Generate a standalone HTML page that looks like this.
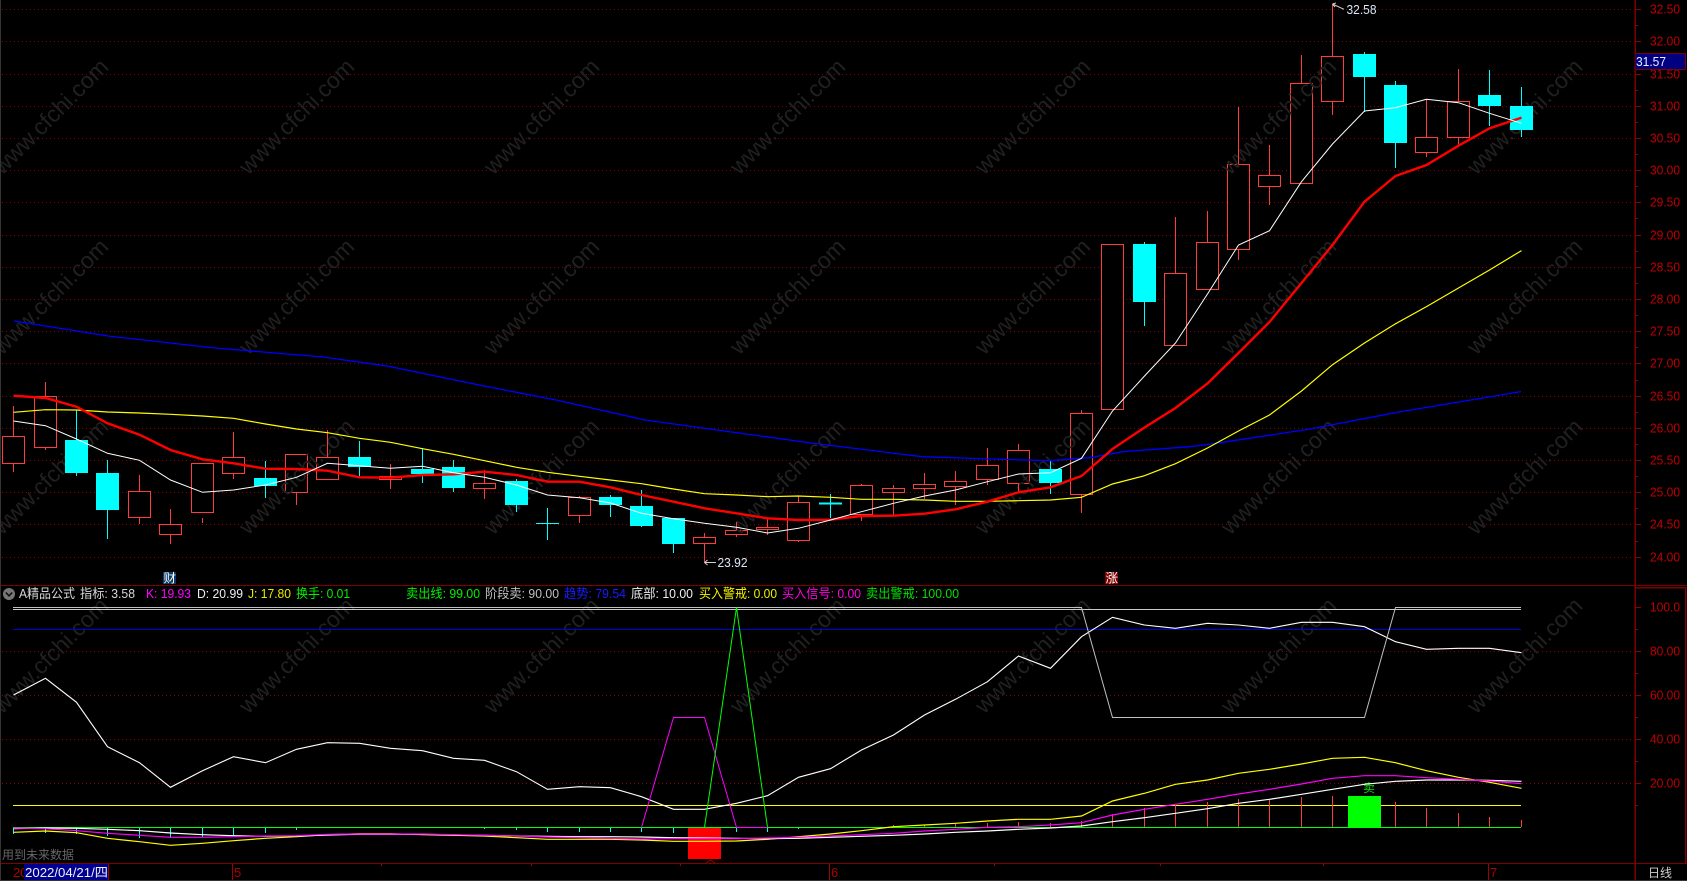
<!DOCTYPE html>
<html><head><meta charset="utf-8"><title>K线</title>
<style>
html,body{margin:0;padding:0;background:#000;width:1687px;height:881px;overflow:hidden}
svg{display:block;font-family:"Liberation Sans","Noto Sans CJK SC",sans-serif}
</style></head><body>
<svg width="1687" height="881" viewBox="0 0 1687 881" xmlns="http://www.w3.org/2000/svg">
<rect width="1687" height="881" fill="#000"/>
<!-- grid -->
<path stroke="#8c0000" stroke-width="1" stroke-dasharray="1 3" fill="none" shape-rendering="crispEdges" d="M2 9.5H1634M2 41.5H1634M2 74.5H1634M2 106.5H1634M2 138.5H1634M2 170.5H1634M2 202.5H1634M2 235.5H1634M2 267.5H1634M2 299.5H1634M2 331.5H1634M2 363.5H1634M2 396.5H1634M2 428.5H1634M2 460.5H1634M2 492.5H1634M2 524.5H1634M2 557.5H1634M2 651.5H1634M2 695.5H1634M2 739.5H1634M2 783.5H1634"/>
<!-- red hollow bodies -->
<g fill="#000" stroke="#ff3c3c" stroke-width="1" shape-rendering="crispEdges">
<rect x="2.5" y="436.5" width="22" height="27"/><rect x="34.5" y="396.5" width="22" height="51"/><rect x="128.5" y="491.5" width="22" height="26"/><rect x="159.5" y="524.5" width="22" height="10"/><rect x="191.5" y="463.5" width="22" height="49"/><rect x="222.5" y="457.5" width="22" height="16"/><rect x="285.5" y="454.5" width="22" height="38"/><rect x="316.5" y="457.5" width="22" height="22"/><rect x="379.5" y="476.5" width="22" height="3"/><rect x="473.5" y="483.5" width="22" height="5"/><rect x="568.5" y="497.5" width="22" height="18"/><rect x="693.5" y="537.5" width="22" height="6"/><rect x="725.5" y="530.5" width="22" height="4"/><rect x="756.5" y="527.5" width="22" height="2"/><rect x="787.5" y="502.5" width="22" height="38"/><rect x="850.5" y="485.5" width="22" height="29"/><rect x="882.5" y="488.5" width="22" height="4"/><rect x="913.5" y="484.5" width="22" height="4"/><rect x="944.5" y="481.5" width="22" height="5"/><rect x="976.5" y="465.5" width="22" height="14"/><rect x="1007.5" y="450.5" width="22" height="33"/><rect x="1070.5" y="413.5" width="22" height="81"/><rect x="1101.5" y="244.5" width="22" height="165"/><rect x="1164.5" y="273.5" width="22" height="72"/><rect x="1196.5" y="242.5" width="22" height="47"/><rect x="1227.5" y="164.5" width="22" height="85"/><rect x="1258.5" y="175.5" width="22" height="11"/><rect x="1290.5" y="83.5" width="22" height="100"/><rect x="1321.5" y="56.5" width="22" height="45"/><rect x="1415.5" y="137.5" width="22" height="15"/><rect x="1447.5" y="101.5" width="22" height="36"/>
</g>
<!-- watermark -->
<g fill="#202020" font-size="23" text-anchor="middle">
<text transform="translate(56 122) rotate(-45)">www.cfchi.com</text><text transform="translate(302 122) rotate(-45)">www.cfchi.com</text><text transform="translate(547 122) rotate(-45)">www.cfchi.com</text><text transform="translate(793 122) rotate(-45)">www.cfchi.com</text><text transform="translate(1038 122) rotate(-45)">www.cfchi.com</text><text transform="translate(1284 122) rotate(-45)">www.cfchi.com</text><text transform="translate(1530 122) rotate(-45)">www.cfchi.com</text>
<text transform="translate(56 302) rotate(-45)">www.cfchi.com</text><text transform="translate(302 302) rotate(-45)">www.cfchi.com</text><text transform="translate(547 302) rotate(-45)">www.cfchi.com</text><text transform="translate(793 302) rotate(-45)">www.cfchi.com</text><text transform="translate(1038 302) rotate(-45)">www.cfchi.com</text><text transform="translate(1284 302) rotate(-45)">www.cfchi.com</text><text transform="translate(1530 302) rotate(-45)">www.cfchi.com</text>
<text transform="translate(56 482) rotate(-45)">www.cfchi.com</text><text transform="translate(302 482) rotate(-45)">www.cfchi.com</text><text transform="translate(547 482) rotate(-45)">www.cfchi.com</text><text transform="translate(793 482) rotate(-45)">www.cfchi.com</text><text transform="translate(1038 482) rotate(-45)">www.cfchi.com</text><text transform="translate(1284 482) rotate(-45)">www.cfchi.com</text><text transform="translate(1530 482) rotate(-45)">www.cfchi.com</text>
<text transform="translate(56 661) rotate(-45)">www.cfchi.com</text><text transform="translate(302 661) rotate(-45)">www.cfchi.com</text><text transform="translate(547 661) rotate(-45)">www.cfchi.com</text><text transform="translate(793 661) rotate(-45)">www.cfchi.com</text><text transform="translate(1038 661) rotate(-45)">www.cfchi.com</text><text transform="translate(1284 661) rotate(-45)">www.cfchi.com</text><text transform="translate(1530 661) rotate(-45)">www.cfchi.com</text>
</g>
<!-- red wicks -->
<path stroke="#ff3c3c" stroke-width="1" fill="none" shape-rendering="crispEdges" d="M13.5 406V436M13.5 464V472M45.5 382V396M45.5 448V450M139.5 475V491M139.5 518V524M170.5 509V524M170.5 535V544M202.5 518V523M233.5 432V457M233.5 474V479M296.5 493V505M327.5 430V457M390.5 464V476M390.5 480V489M484.5 470V483M484.5 489V499M579.5 496V497M579.5 516V523M704.5 533V537M704.5 544V563M736.5 522V530M736.5 535V537M767.5 519V527M767.5 530V535M798.5 496V502M798.5 541V542M861.5 484V485M861.5 515V521M893.5 485V488M893.5 493V515M924.5 473V484M924.5 489V499M955.5 471V481M955.5 487V505M987.5 448V465M987.5 480V485M1018.5 444V450M1018.5 484V492M1081.5 410V413M1081.5 495V513M1175.5 217V273M1207.5 211V242M1238.5 107V164M1238.5 250V260M1269.5 145V175M1269.5 187V205M1301.5 55V83M1332.5 4V56M1332.5 102V115M1426.5 99V137M1426.5 153V157M1458.5 69V101M1458.5 138V145"/>
<!-- cyan wicks -->
<path stroke="#00ffff" stroke-width="1" fill="none" shape-rendering="crispEdges" d="M76.5 410V440M76.5 473V476M107.5 460V473M107.5 510V539M265.5 461V478M265.5 486V498M359.5 441V457M359.5 467V476M422.5 448V469M422.5 474V483M453.5 460V467M453.5 488V492M516.5 479V481M516.5 505V512M547.5 508V540M536 523.5H559M610.5 495V497M610.5 505V517M641.5 490V506M641.5 526V527M673.5 544V553M830.5 494V518M1050.5 461V469M1050.5 483V494M1144.5 242V244M1144.5 302V326M1364.5 52V54M1364.5 77V112M1395.5 81V85M1395.5 143V168M1489.5 70V95M1489.5 106V126M1521.5 87V106M1521.5 130V137"/>
<path stroke="#00ffff" stroke-width="2" fill="none" shape-rendering="crispEdges" d="M819 503.5H842"/>
<!-- cyan bodies -->
<g fill="#00ffff" shape-rendering="crispEdges">
<rect x="65" y="440" width="23" height="33"/><rect x="96" y="473" width="23" height="37"/><rect x="254" y="478" width="23" height="8"/><rect x="348" y="457" width="23" height="10"/><rect x="411" y="469" width="23" height="5"/><rect x="442" y="467" width="23" height="21"/><rect x="505" y="481" width="23" height="24"/><rect x="599" y="497" width="23" height="8"/><rect x="630" y="506" width="23" height="20"/><rect x="662" y="518" width="23" height="26"/><rect x="1039" y="469" width="23" height="14"/><rect x="1133" y="244" width="23" height="58"/><rect x="1353" y="54" width="23" height="23"/><rect x="1384" y="85" width="23" height="58"/><rect x="1478" y="95" width="23" height="11"/><rect x="1510" y="106" width="23" height="24"/>
</g>
<!-- MAs -->
<polyline fill="none" stroke="#0000ff" stroke-width="1.3" points="14,321 108,336 215,348 323,357 387,366 484,386 556,400 645,420 811,443 922,456.7 991,459 1050,460.7 1090,457.7 1123,451.7 1190,446.7 1223,442.3 1310,429 1399,412 1521,391.6"/>
<polyline fill="none" stroke="#ffff00" stroke-width="1.2" points="13.5,412.3 45.5,409.7 76.5,410 107.5,412 139.5,413 170.5,414.3 202.5,416 233.5,418.3 265.5,424 296.5,429 327.5,432.7 359.5,438.3 390.5,442.3 422.5,448.7 453.5,454.3 484.5,460.7 516.5,467.3 547.5,472.3 579.5,476.3 610.5,480 641.5,483.7 673.5,489 704.5,493.7 736.5,495 767.5,496.7 798.5,496 830.5,497.3 861.5,499.3 893.5,499.3 924.5,500 955.5,501.3 987.5,501.3 1018.5,500.7 1050.5,500 1081.5,497.3 1112.5,484 1144.5,475.7 1175.5,463.7 1207.5,448 1238.5,431 1269.5,415 1301.5,391 1332.5,364.7 1364.5,343 1395.5,323.8 1426.5,306.6 1458.5,288 1489.5,270 1521.5,250.6"/>
<polyline fill="none" stroke="#ff0000" stroke-width="2.4" points="13.5,395.7 45.5,398 76.5,406.7 107.5,423.3 139.5,434.7 170.5,450 202.5,459.3 233.5,463.3 265.5,468.7 296.5,469 327.5,470.7 359.5,477.3 390.5,477.7 422.5,475 453.5,474.3 484.5,471.7 516.5,475 547.5,481.7 579.5,481.7 610.5,487.3 641.5,495 673.5,501.7 704.5,508.3 736.5,513.3 767.5,518.3 798.5,520 830.5,519.7 861.5,516 893.5,515.7 924.5,513.7 955.5,509.3 987.5,501.7 1018.5,492.3 1050.5,487.3 1081.5,476 1112.5,449 1144.5,427.5 1175.5,408 1207.5,383.5 1238.5,353 1269.5,322 1301.5,283 1332.5,245 1364.5,201.7 1395.5,176 1426.5,165 1458.5,145.7 1489.5,128.3 1521.5,117.7"/>
<polyline fill="none" stroke="#ffffff" stroke-width="1" points="13.5,421 45.5,425.7 76.5,439 107.5,453.3 139.5,460.3 170.5,480 202.5,492.3 233.5,490 265.5,485 296.5,477.3 327.5,463.3 359.5,465.7 390.5,468.3 422.5,466.3 453.5,472.7 484.5,477.3 516.5,485 547.5,495 579.5,497.7 610.5,503 641.5,513.3 673.5,518.7 704.5,523.3 736.5,527.3 767.5,533 798.5,528.3 830.5,520 861.5,511.7 893.5,503.3 924.5,496 955.5,490 987.5,481.7 1018.5,474 1050.5,472.7 1081.5,458.3 1112.5,411 1144.5,376 1175.5,343 1207.5,294 1238.5,245 1269.5,230.7 1301.5,181.7 1332.5,144 1364.5,111 1395.5,107.7 1426.5,99.3 1458.5,102.7 1489.5,113.3 1521.5,123.3"/>
<!-- price marks -->
<path fill="none" stroke="#d0d0d0" stroke-width="1" d="M1332.5 4L1344 9.3M1332.5 4L1336 3M1332.5 4L1335 7M704.5 562.5H716M704.5 562.5L707.5 560M704.5 562.5L707.5 565"/>
<text x="1346.5" y="14" fill="#d8e8f8" font-size="13" textLength="30" lengthAdjust="spacingAndGlyphs">32.58</text>
<text x="717.5" y="567" fill="#d8e8f8" font-size="13" textLength="30" lengthAdjust="spacingAndGlyphs">23.92</text>
<rect x="163" y="572" width="13" height="12" fill="#0a3a66"/>
<text x="163.5" y="582.5" fill="#fff" font-size="12.5">财</text>
<rect x="1105" y="572" width="13" height="12" fill="#800000"/>
<text x="1105.5" y="582.5" fill="#fff" font-size="12.5">涨</text>
<!-- panel lines -->
<path fill="none" stroke="#800000" stroke-width="1" shape-rendering="crispEdges" d="M0 585.5H1687M0 863.5H1687"/>
<path fill="none" stroke="#800000" stroke-width="1.5" shape-rendering="crispEdges" d="M1635 0V881M1636 587.5H1685.5M1685.5 587V863"/>
<path fill="none" stroke="#333" shape-rendering="crispEdges" d="M.5 0V881M0 880.5H1687"/>
<!-- axis ticks -->
<path fill="none" stroke="#900000" shape-rendering="crispEdges" d="M1635 9.5h6M1635 41.5h6M1635 74.5h6M1635 106.5h6M1635 138.5h6M1635 170.5h6M1635 202.5h6M1635 235.5h6M1635 267.5h6M1635 299.5h6M1635 331.5h6M1635 363.5h6M1635 396.5h6M1635 428.5h6M1635 460.5h6M1635 492.5h6M1635 524.5h6M1635 557.5h6M1635 25.5h3M1635 57.5h3M1635 90.5h3M1635 122.5h3M1635 154.5h3M1635 186.5h3M1635 218.5h3M1635 251.5h3M1635 283.5h3M1635 315.5h3M1635 347.5h3M1635 380.5h3M1635 412.5h3M1635 444.5h3M1635 476.5h3M1635 508.5h3M1635 541.5h3M1635 607.5h6M1635 651.5h6M1635 695.5h6M1635 739.5h6M1635 783.5h6M1635 629.5h3M1635 673.5h3M1635 717.5h3M1635 761.5h3M1635 805.5h3"/>
<g fill="#c00000" font-size="13">
<text x="1650" y="13.5" textLength="30" lengthAdjust="spacingAndGlyphs">32.50</text><text x="1650" y="45.5" textLength="30" lengthAdjust="spacingAndGlyphs">32.00</text><text x="1650" y="78.5" textLength="30" lengthAdjust="spacingAndGlyphs">31.50</text><text x="1650" y="110.5" textLength="30" lengthAdjust="spacingAndGlyphs">31.00</text><text x="1650" y="142.5" textLength="30" lengthAdjust="spacingAndGlyphs">30.50</text><text x="1650" y="174.5" textLength="30" lengthAdjust="spacingAndGlyphs">30.00</text><text x="1650" y="206.5" textLength="30" lengthAdjust="spacingAndGlyphs">29.50</text><text x="1650" y="239.5" textLength="30" lengthAdjust="spacingAndGlyphs">29.00</text><text x="1650" y="271.5" textLength="30" lengthAdjust="spacingAndGlyphs">28.50</text><text x="1650" y="303.5" textLength="30" lengthAdjust="spacingAndGlyphs">28.00</text><text x="1650" y="335.5" textLength="30" lengthAdjust="spacingAndGlyphs">27.50</text><text x="1650" y="367.5" textLength="30" lengthAdjust="spacingAndGlyphs">27.00</text><text x="1650" y="400.5" textLength="30" lengthAdjust="spacingAndGlyphs">26.50</text><text x="1650" y="432.5" textLength="30" lengthAdjust="spacingAndGlyphs">26.00</text><text x="1650" y="464.5" textLength="30" lengthAdjust="spacingAndGlyphs">25.50</text><text x="1650" y="496.5" textLength="30" lengthAdjust="spacingAndGlyphs">25.00</text><text x="1650" y="528.5" textLength="30" lengthAdjust="spacingAndGlyphs">24.50</text><text x="1650" y="561.5" textLength="30" lengthAdjust="spacingAndGlyphs">24.00</text>
<text x="1650" y="611.5" textLength="30" lengthAdjust="spacingAndGlyphs">100.0</text><text x="1650" y="655.5" textLength="30" lengthAdjust="spacingAndGlyphs">80.00</text><text x="1650" y="699.5" textLength="30" lengthAdjust="spacingAndGlyphs">60.00</text><text x="1650" y="743.5" textLength="30" lengthAdjust="spacingAndGlyphs">40.00</text><text x="1650" y="787.5" textLength="30" lengthAdjust="spacingAndGlyphs">20.00</text>
</g>
<rect x="1635" y="53.5" width="50.5" height="16" fill="#000080" stroke="#800000" stroke-width="1" shape-rendering="crispEdges"/>
<text x="1636" y="66" fill="#e8f0ff" font-size="13" textLength="30" lengthAdjust="spacingAndGlyphs">31.57</text>
<!-- header row -->
<circle cx="9" cy="594" r="6" fill="#777"/>
<path d="M5.8 592.5L9 595.8L12.2 592.5" fill="none" stroke="#111" stroke-width="1.6"/>
<g font-size="13">
<text x="19" y="598" fill="#d8d8d8" textLength="56" lengthAdjust="spacingAndGlyphs">A精品公式</text>
<text x="80" y="598" fill="#d8d8d8" textLength="55" lengthAdjust="spacingAndGlyphs">指标: 3.58</text>
<text x="146" y="598" fill="#ff00ff" textLength="45" lengthAdjust="spacingAndGlyphs">K: 19.93</text>
<text x="197" y="598" fill="#f0f0f0" textLength="46" lengthAdjust="spacingAndGlyphs">D: 20.99</text>
<text x="248" y="598" fill="#e8e800" textLength="43" lengthAdjust="spacingAndGlyphs">J: 17.80</text>
<text x="296" y="598" fill="#00f000" textLength="54" lengthAdjust="spacingAndGlyphs">换手: 0.01</text>
<text x="406" y="598" fill="#00f000" textLength="74" lengthAdjust="spacingAndGlyphs">卖出线: 99.00</text>
<text x="485" y="598" fill="#c0c0c0" textLength="74" lengthAdjust="spacingAndGlyphs">阶段卖: 90.00</text>
<text x="564" y="598" fill="#1a1aff" textLength="62" lengthAdjust="spacingAndGlyphs">趋势: 79.54</text>
<text x="631" y="598" fill="#f0f0f0" textLength="62" lengthAdjust="spacingAndGlyphs">底部: 10.00</text>
<text x="699" y="598" fill="#f0f000" textLength="78" lengthAdjust="spacingAndGlyphs">买入警戒: 0.00</text>
<text x="782" y="598" fill="#ff00e0" textLength="79" lengthAdjust="spacingAndGlyphs">买入信号: 0.00</text>
<text x="866" y="598" fill="#00e000" textLength="93" lengthAdjust="spacingAndGlyphs">卖出警戒: 100.00</text>
</g>
<!-- indicator -->
<path fill="none" stroke="#c8c8c8" stroke-width="1" shape-rendering="crispEdges" d="M13 609.5H1521"/>
<path fill="none" stroke="#0000e0" stroke-width="1" shape-rendering="crispEdges" d="M13 629.5H1521"/>
<path fill="none" stroke="#ffff00" stroke-width="1" shape-rendering="crispEdges" d="M13 805.5H1521"/>
<!-- sticks -->
<path fill="none" stroke="#00ffff" stroke-width="1" shape-rendering="crispEdges" d="M13.5 827V834M45.5 827V833M76.5 827V834M107.5 827V836M139.5 827V838M170.5 827V838M202.5 827V837M233.5 827V835M265.5 827V833M296.5 827V830M484.5 827V829M516.5 827V830M547.5 827V832M579.5 827V832M610.5 827V832M641.5 827V832M673.5 827V833M736.5 827V832M767.5 827V832M798.5 827V829"/>
<path fill="none" stroke="#ff3c3c" stroke-width="1" shape-rendering="crispEdges" d="M893.5 827V825M924.5 827V825M955.5 827V824M987.5 827V823M1018.5 827V822M1050.5 827V823M1081.5 827V821M1112.5 827V814M1144.5 827V808M1175.5 827V805M1207.5 827V802M1238.5 827V799M1269.5 827V799M1301.5 827V797M1332.5 827V796M1395.5 827V802M1426.5 827V808M1458.5 827V813M1489.5 827V817M1521.5 827V820"/>
<rect x="1348" y="796" width="33" height="31.5" fill="#00ff00"/>
<text x="1363" y="792" fill="#00e000" font-size="12">卖</text>
<rect x="688" y="827" width="33" height="32" fill="#ff0000"/>
<path d="M706 863L710.5 860L715 863" fill="none" stroke="#a00000" stroke-width="1"/>
<polyline fill="none" stroke="#ffffff" stroke-width="1.1" points="13.5,695 45.5,678.3 76.5,702.3 107.5,746.7 139.5,762.7 170.5,787.3 202.5,770.7 233.5,756.7 265.5,762.7 296.5,749.3 327.5,742.7 359.5,743.3 390.5,748.3 422.5,750.7 453.5,758.3 484.5,760.3 516.5,771.7 547.5,789.3 579.5,786.7 610.5,787.7 641.5,796.7 673.5,809.3 704.5,809.3 736.5,803.3 767.5,795.7 798.5,777.3 830.5,768.7 861.5,750 893.5,735 924.5,715 955.5,699.3 987.5,681.7 1018.5,656 1050.5,668.3 1081.5,636.7 1112.5,617.3 1144.5,625 1175.5,628.3 1207.5,623.3 1238.5,625 1269.5,628.3 1301.5,622.3 1332.5,622.3 1364.5,626.7 1395.5,641.7 1426.5,649.3 1458.5,648.3 1489.5,648.3 1521.5,652.7"/>
<polyline fill="none" stroke="#c0c0c0" stroke-width="1" points="13,607.5 1081.5,607.5 1112.5,717.5 1364.5,717.5 1395.5,607.5 1521,607.5"/>
<path fill="none" stroke="#00ff00" stroke-width="1" shape-rendering="crispEdges" d="M13 827.5H1521"/>
<polyline fill="none" stroke="#ff00ff" stroke-width="1" points="641.5,827.5 673.5,717.5 704.5,717.5 736.5,827.5 767.5,827.5"/>
<polyline fill="none" stroke="#00ff00" stroke-width="1" points="704.5,827.5 736.5,607.5 767.5,827.5"/>
<polyline fill="none" stroke="#ffff00" stroke-width="1.2" points="13.5,832.3 45.5,831 76.5,832.7 107.5,838.3 139.5,841.7 170.5,845.3 202.5,843.3 233.5,840.7 265.5,838.3 296.5,836.7 327.5,834.7 359.5,833.7 390.5,833.7 422.5,834.7 453.5,835.3 484.5,836 516.5,837.7 547.5,839.3 579.5,839.3 610.5,839.3 641.5,840 673.5,841.3 704.5,841.3 736.5,841 767.5,839.3 798.5,836.7 830.5,834 861.5,830.7 893.5,826.7 924.5,825 955.5,823.3 987.5,821 1018.5,819.3 1050.5,819.3 1081.5,816 1112.5,801 1144.5,793.3 1175.5,784.3 1207.5,780 1238.5,773.3 1269.5,769.3 1301.5,764 1332.5,758.3 1364.5,757.3 1395.5,762.7 1426.5,770.7 1458.5,777.3 1489.5,782.3 1521.5,788.3"/>
<polyline fill="none" stroke="#ffffff" stroke-width="1.2" points="13.5,828.7 45.5,828 76.5,828.3 107.5,829.3 139.5,830.7 170.5,833 202.5,834.7 233.5,835.7 265.5,836.3 296.5,836 327.5,835 359.5,834.3 390.5,834.3 422.5,834.3 453.5,835 484.5,835.3 516.5,836 547.5,836.3 579.5,836.7 610.5,836.7 641.5,837 673.5,837.7 704.5,838 736.5,838.3 767.5,838.7 798.5,838.3 830.5,837.3 861.5,836.3 893.5,835.3 924.5,834 955.5,832.3 987.5,831 1018.5,829.3 1050.5,828 1081.5,826 1112.5,821.7 1144.5,817.7 1175.5,813.3 1207.5,808.7 1238.5,803.3 1269.5,799.3 1301.5,794.3 1332.5,789.3 1364.5,784.3 1395.5,781.3 1426.5,780 1458.5,780 1489.5,780.3 1521.5,781.3"/>
<polyline fill="none" stroke="#ff00ff" stroke-width="1.2" points="13.5,828 45.5,828.7 76.5,830.7 107.5,833.3 139.5,835.3 170.5,837.3 202.5,837.3 233.5,836.7 265.5,836 296.5,835.7 327.5,834.3 359.5,834 390.5,834 422.5,834 453.5,834.7 484.5,835.3 516.5,836 547.5,837 579.5,837.7 610.5,838.3 641.5,839 673.5,838.7 704.5,838.7 736.5,838.7 767.5,838 798.5,837.3 830.5,836 861.5,834.7 893.5,833.3 924.5,831 955.5,829.3 987.5,827.3 1018.5,826.7 1050.5,825 1081.5,822.7 1112.5,815 1144.5,809.3 1175.5,804.3 1207.5,799.3 1238.5,794 1269.5,789.3 1301.5,784 1332.5,778.3 1364.5,775.7 1395.5,775.7 1426.5,777.7 1458.5,779.3 1489.5,781 1521.5,783.7"/>
<!-- bottom -->
<text x="2" y="859" fill="#666" font-size="12" textLength="72" lengthAdjust="spacingAndGlyphs">用到未来数据</text>
<text x="13" y="877" fill="#b00000" font-size="13">20</text>
<rect x="24" y="864" width="84" height="16" fill="#000090"/>
<text x="25" y="877" fill="#f0f0f0" font-size="13" textLength="83" lengthAdjust="spacingAndGlyphs">2022/04/21/四</text>
<path fill="none" stroke="#a00000" shape-rendering="crispEdges" d="M108.5 864V880M232.5 864V880M829.5 864V880M1488.5 864V880M381.5 864V866M531.5 864V866M680.5 864V866M994.5 864V866M1160.5 864V866M1323.5 864V866"/>
<text x="234" y="877" fill="#b00000" font-size="13">5</text>
<text x="831" y="877" fill="#b00000" font-size="13">6</text>
<text x="1490" y="877" fill="#b00000" font-size="13">7</text>
<text x="1648" y="877" fill="#d0d0d0" font-size="12">日线</text>
</svg>
</body></html>
